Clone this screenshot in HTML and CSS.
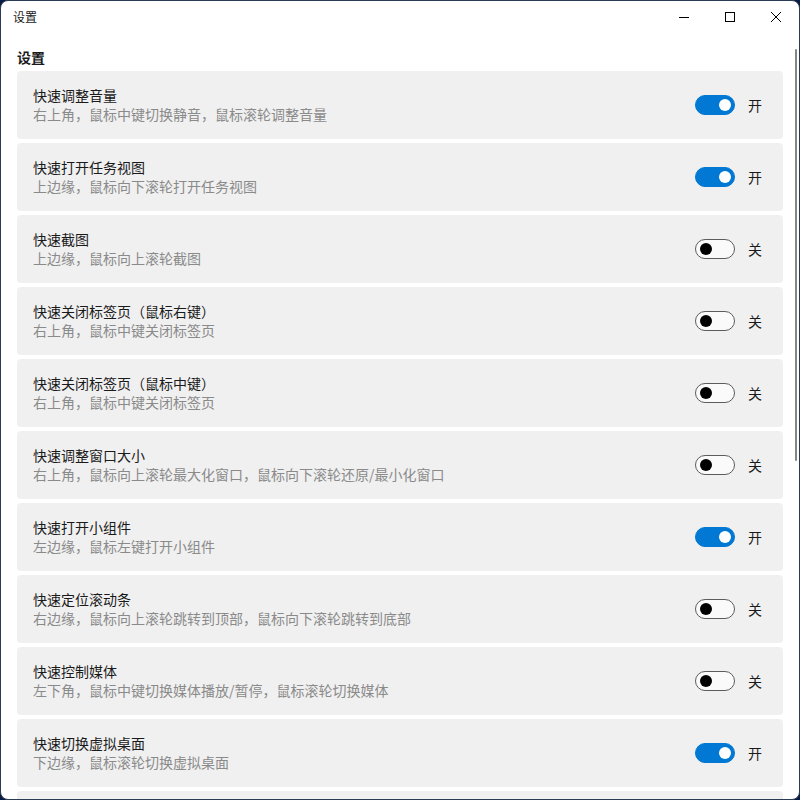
FILE: index.html
```html
<!DOCTYPE html>
<html lang="zh-CN">
<head>
    <meta charset="UTF-8">
    <title>设置</title>
    <link rel="stylesheet" href="styles.css">
</head>
<body>
    <div class="window">
        <div class="title-bar">
            <span class="title-text">设置</span>
            <div class="window-buttons">
                <button class="win-btn">
                    <svg width="10" height="10" viewBox="0 0 10 10"><path d="M0 5.5h10" stroke="#000" stroke-width="1"/></svg>
                </button>
                <button class="win-btn">
                    <svg width="10" height="10" viewBox="0 0 10 10"><rect x="0.5" y="0.5" width="9" height="9" fill="none" stroke="#000" stroke-width="1"/></svg>
                </button>
                <button class="win-btn">
                    <svg width="10" height="10" viewBox="0 0 10 10"><path d="M0 0L10 10M10 0L0 10" stroke="#000" stroke-width="1"/></svg>
                </button>
            </div>
        </div>
        <div class="content">
            <h1 class="page-title">设置</h1>
            <div class="card-list">
                <div class="card">
                    <div class="card-text">
                        <div class="card-title">快速调整音量</div>
                        <div class="card-desc">右上角，鼠标中键切换静音，鼠标滚轮调整音量</div>
                    </div>
                    <div class="switch on"><span class="knob"></span></div>
                    <span class="switch-label">开</span>
                </div>
                <div class="card">
                    <div class="card-text">
                        <div class="card-title">快速打开任务视图</div>
                        <div class="card-desc">上边缘，鼠标向下滚轮打开任务视图</div>
                    </div>
                    <div class="switch on"><span class="knob"></span></div>
                    <span class="switch-label">开</span>
                </div>
                <div class="card">
                    <div class="card-text">
                        <div class="card-title">快速截图</div>
                        <div class="card-desc">上边缘，鼠标向上滚轮截图</div>
                    </div>
                    <div class="switch"><span class="knob"></span></div>
                    <span class="switch-label">关</span>
                </div>
                <div class="card">
                    <div class="card-text">
                        <div class="card-title">快速关闭标签页（鼠标右键）</div>
                        <div class="card-desc">右上角，鼠标中键关闭标签页</div>
                    </div>
                    <div class="switch"><span class="knob"></span></div>
                    <span class="switch-label">关</span>
                </div>
                <div class="card">
                    <div class="card-text">
                        <div class="card-title">快速关闭标签页（鼠标中键）</div>
                        <div class="card-desc">右上角，鼠标中键关闭标签页</div>
                    </div>
                    <div class="switch"><span class="knob"></span></div>
                    <span class="switch-label">关</span>
                </div>
                <div class="card">
                    <div class="card-text">
                        <div class="card-title">快速调整窗口大小</div>
                        <div class="card-desc">右上角，鼠标向上滚轮最大化窗口，鼠标向下滚轮还原/最小化窗口</div>
                    </div>
                    <div class="switch"><span class="knob"></span></div>
                    <span class="switch-label">关</span>
                </div>
                <div class="card">
                    <div class="card-text">
                        <div class="card-title">快速打开小组件</div>
                        <div class="card-desc">左边缘，鼠标左键打开小组件</div>
                    </div>
                    <div class="switch on"><span class="knob"></span></div>
                    <span class="switch-label">开</span>
                </div>
                <div class="card">
                    <div class="card-text">
                        <div class="card-title">快速定位滚动条</div>
                        <div class="card-desc">右边缘，鼠标向上滚轮跳转到顶部，鼠标向下滚轮跳转到底部</div>
                    </div>
                    <div class="switch"><span class="knob"></span></div>
                    <span class="switch-label">关</span>
                </div>
                <div class="card">
                    <div class="card-text">
                        <div class="card-title">快速控制媒体</div>
                        <div class="card-desc">左下角，鼠标中键切换媒体播放/暂停，鼠标滚轮切换媒体</div>
                    </div>
                    <div class="switch"><span class="knob"></span></div>
                    <span class="switch-label">关</span>
                </div>
                <div class="card">
                    <div class="card-text">
                        <div class="card-title">快速切换虚拟桌面</div>
                        <div class="card-desc">下边缘，鼠标滚轮切换虚拟桌面</div>
                    </div>
                    <div class="switch on"><span class="knob"></span></div>
                    <span class="switch-label">开</span>
                </div>
                <div class="card"></div>
            </div>
        </div>
        <div class="scrollbar"></div>
    </div>
</body>
</html>
```

FILE: styles.css
```css
html, body {
    margin: 0;
    padding: 0;
    height: 800px;
    overflow: hidden;
    background-color: #0b1c44;
}
body {
    font-family: "Noto Sans CJK SC", "Noto Sans", sans-serif;
    color: #1a1a1a;
}
.window {
    position: relative;
    width: 798px;
    height: 798px;
    background-color: #ffffff;
    border: 1px solid #2b3a55;
    border-radius: 8px;
    overflow: hidden;
}
.title-bar {
    display: flex;
    align-items: center;
    justify-content: space-between;
    height: 32px;
}
.title-text {
    font-size: 12px;
    line-height: 16px;
    margin-left: 12px;
}
.window-buttons {
    display: flex;
    height: 32px;
}
.win-btn {
    width: 46px;
    height: 32px;
    border: none;
    padding: 0;
    background-color: transparent;
    display: flex;
    align-items: center;
    justify-content: center;
}
.content {
    padding: 14px 16px 0 16px;
}
.page-title {
    margin: 0 0 4px 0;
    font-size: 14px;
    line-height: 20px;
    font-weight: 700;
}
.card-list {
    display: flex;
    flex-direction: column;
    gap: 4px;
}
.card {
    display: flex;
    align-items: center;
    flex-shrink: 0;
    height: 68px;
    box-sizing: border-box;
    padding: 0 21px 0 16px;
    background-color: #f0f0f0;
    border-radius: 4px;
}
.card-text {
    flex: 1;
}
.card-title {
    font-size: 14px;
    line-height: 19px;
    color: #1a1a1a;
}
.card-desc {
    font-size: 14px;
    line-height: 19px;
    color: #8a8a8a;
}
.switch {
    position: relative;
    width: 40px;
    height: 20px;
    box-sizing: border-box;
    border: 1px solid #5c5c5c;
    border-radius: 10px;
    background-color: #fafafa;
}
.switch .knob {
    position: absolute;
    top: 3px;
    left: 4px;
    width: 12px;
    height: 12px;
    border-radius: 50%;
    background-color: #000000;
}
.switch.on {
    border-color: #0078d4;
    background-color: #0078d4;
}
.switch.on .knob {
    left: 23px;
    background-color: #ffffff;
}
.switch-label {
    width: 14px;
    margin-left: 13px;
    font-size: 14px;
    line-height: 19px;
}
.scrollbar {
    position: absolute;
    top: 48px;
    right: 2px;
    width: 2px;
    height: 412px;
    background-color: #858585;
    border-radius: 1px;
}
```
